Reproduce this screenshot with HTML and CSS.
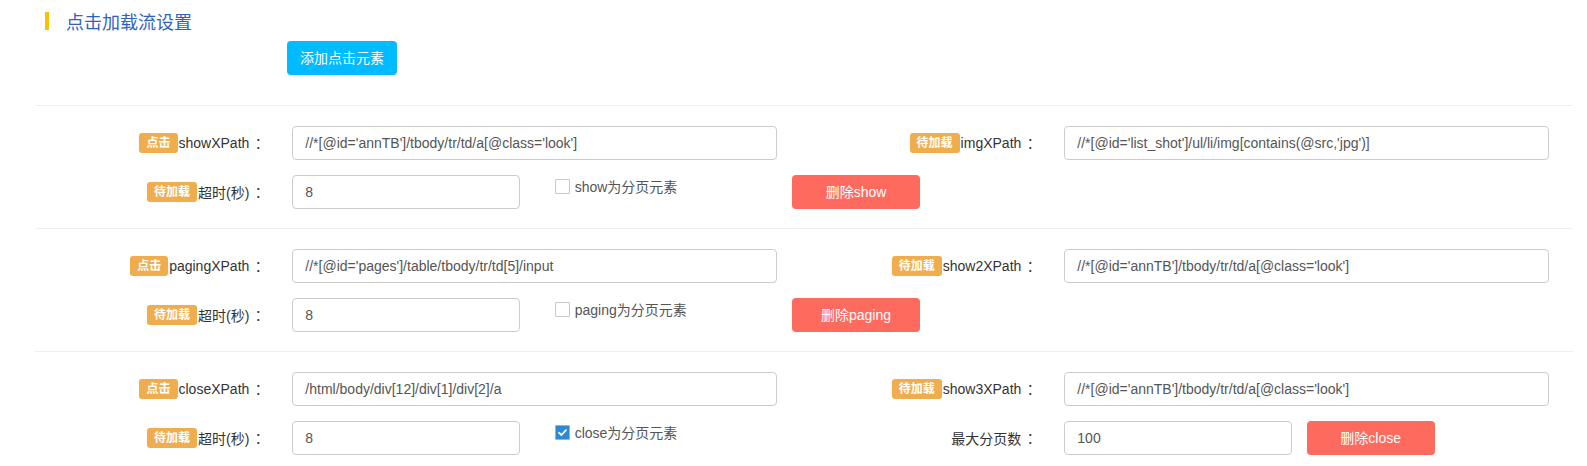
FILE: index.html
```html
<!DOCTYPE html>
<html lang="zh-CN">
<head>
<meta charset="utf-8">
<title>点击加载流设置</title>
<link rel="stylesheet" href="styles.css">
</head>
<body>
<div class="page">
  <h2 class="title"><span class="bar"></span>点击加载流设置</h2>
  <div class="add-row"><button class="btn btn-add" type="button">添加点击元素</button></div>

  <section class="block">
    <div class="grid">
      <label class="lbl"><span class="tag">点击</span>showXPath<span class="colon">：</span></label>
      <div class="field span2"><input class="inp" type="text" value="//*[@id='annTB']/tbody/tr/td/a[@class='look']"></div>
      <label class="lbl"><span class="tag">待加载</span>imgXPath<span class="colon">：</span></label>
      <div class="field span2"><input class="inp" type="text" value="//*[@id='list_shot']/ul/li/img[contains(@src,'jpg')]"></div>

      <label class="lbl"><span class="tag">待加载</span>超时(秒)<span class="colon">：</span></label>
      <div class="field"><input class="inp" type="text" value="8"></div>
      <div class="check"><span class="box"></span>show为分页元素</div>
      <div class="btn-cell"><button class="btn btn-del" type="button">删除show</button></div>
    </div>
  </section>

  <section class="block">
    <div class="grid">
      <label class="lbl"><span class="tag">点击</span>pagingXPath<span class="colon">：</span></label>
      <div class="field span2"><input class="inp" type="text" value="//*[@id='pages']/table/tbody/tr/td[5]/input"></div>
      <label class="lbl"><span class="tag">待加载</span>show2XPath<span class="colon">：</span></label>
      <div class="field span2"><input class="inp" type="text" value="//*[@id='annTB']/tbody/tr/td/a[@class='look']"></div>

      <label class="lbl"><span class="tag">待加载</span>超时(秒)<span class="colon">：</span></label>
      <div class="field"><input class="inp" type="text" value="8"></div>
      <div class="check"><span class="box"></span>paging为分页元素</div>
      <div class="btn-cell"><button class="btn btn-del" type="button">删除paging</button></div>
    </div>
  </section>

  <section class="block">
    <div class="grid">
      <label class="lbl"><span class="tag">点击</span>closeXPath<span class="colon">：</span></label>
      <div class="field span2"><input class="inp" type="text" value="/html/body/div[12]/div[1]/div[2]/a"></div>
      <label class="lbl"><span class="tag">待加载</span>show3XPath<span class="colon">：</span></label>
      <div class="field span2"><input class="inp" type="text" value="//*[@id='annTB']/tbody/tr/td/a[@class='look']"></div>

      <label class="lbl"><span class="tag">待加载</span>超时(秒)<span class="colon">：</span></label>
      <div class="field"><input class="inp" type="text" value="8"></div>
      <div class="check"><span class="box checked"><svg width="11" height="11" viewBox="0 0 11 11"><path d="M2 5.6 L4.4 8 L9 3.2" fill="none" stroke="#fff" stroke-width="1.8" stroke-linecap="round" stroke-linejoin="round"/></svg></span>close为分页元素</div>
      <label class="lbl">最大分页数<span class="colon">：</span></label>
      <div class="field"><input class="inp" type="text" value="100"></div>
      <div class="btn-cell"><button class="btn btn-del" type="button">删除close</button></div>
    </div>
  </section>
</div>
</body>
</html>
```

FILE: styles.css
```css
* {
  box-sizing: border-box;
}

html, body {
  margin: 0;
  padding: 0;
  background: #fff;
}

body {
  font-family: "Liberation Sans", "Noto Sans CJK SC", sans-serif;
  font-size: 14px;
  color: #333;
}

.page {
  width: 1587px;
}

.title {
  margin: 9px 0 0 45px;
  display: flex;
  align-items: center;
  font-size: 18px;
  line-height: 24px;
  font-weight: normal;
  color: #2f62bc;
  font-family: "Noto Sans CJK SC", "Liberation Sans", sans-serif;
}

.bar {
  display: inline-block;
  width: 4px;
  height: 18px;
  background: #ffc000;
  margin-right: 17px;
}

.add-row {
  padding-left: 287px;
  margin-top: 8px;
  margin-bottom: 30px;
}

.btn {
  display: inline-block;
  height: 34px;
  border: none;
  border-radius: 4px;
  color: #fff;
  font-family: "Liberation Sans", "Noto Sans CJK SC", sans-serif;
  font-size: 14px;
  line-height: 34px;
  padding: 0;
  cursor: pointer;
}

.btn-add {
  width: 110px;
  background: #00bbff;
}

.btn-del {
  width: 128px;
  background: #ff6a5e;
}

.block {
  margin: 0 14px 0 35px;
  border-top: 1px solid #eeeeee;
  padding: 20px 0 19px;
}

.grid {
  margin-left: -15px;
  display: grid;
  grid-template-columns: repeat(6, 257.33px);
  grid-auto-rows: 34px;
  row-gap: 15px;
}

.lbl {
  display: flex;
  align-items: center;
  justify-content: flex-end;
  padding-right: 12px;
  color: #333;
  white-space: nowrap;
}

.colon {
  font-family: "Noto Sans CJK TC", "Noto Sans CJK SC", sans-serif;
  padding-left: 2px;
}

.tag {
  display: inline-block;
  height: 20px;
  line-height: 20px;
  padding: 0 7px;
  margin-right: 1px;
  background: #f0ad4e;
  border-radius: 3px;
  color: #fff;
  font-size: 12px;
  font-weight: bold;
}

.field {
  padding: 0 15px;
}

.span2 {
  grid-column: span 2;
}

.inp {
  display: block;
  width: 100%;
  height: 34px;
  border: 1px solid #cccccc;
  border-radius: 4px;
  padding: 6px 12px;
  font-family: "Liberation Sans", "Noto Sans CJK SC", sans-serif;
  font-size: 14px;
  color: #555;
  background: #fff;
  outline: none;
}

.check {
  padding: 2px 0 0 20px;
  display: flex;
  align-items: flex-start;
  line-height: 20px;
  color: #555;
  white-space: nowrap;
}

.box {
  width: 15px;
  height: 15px;
  margin: 2px 5px 0 0;
  border: 1px solid #c8c8c8;
  border-radius: 1px;
  background: #fff;
  display: flex;
  align-items: center;
  justify-content: center;
}

.box.checked {
  background: #2b8ad3;
  border-color: #8fb6d6;
}

.btn-cell {
  padding: 0;
}
```
